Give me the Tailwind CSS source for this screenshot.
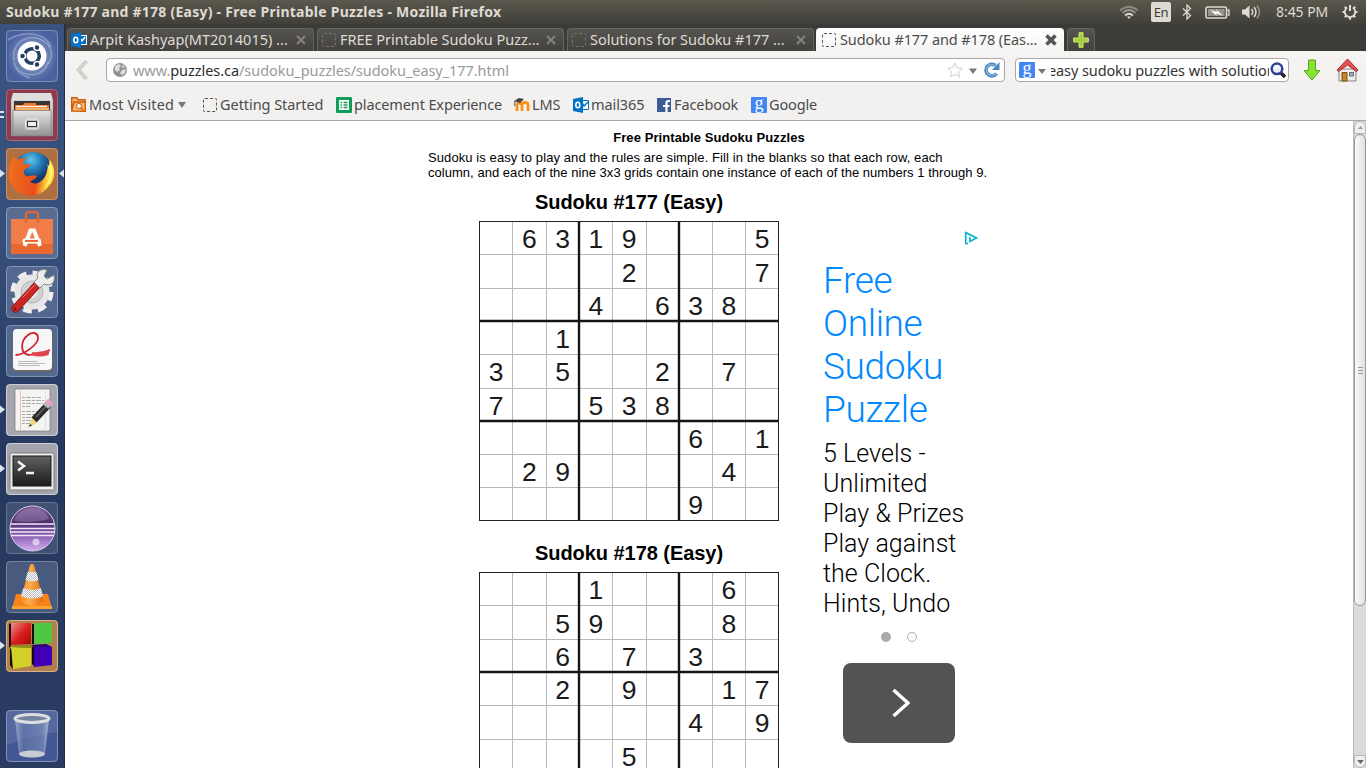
<!DOCTYPE html>
<html lang="en">
<head>
<meta charset="utf-8">
<title>Sudoku #177 and #178 (Easy) - Free Printable Puzzles</title>
<script src="https://cdn.jsdelivr.net/npm/@tailwindcss/browser@4"></script>
</head>
<body class="w-[1366px] h-[768px] overflow-hidden flex flex-col bg-white font-['Noto_Sans','Open_Sans',sans-serif]">

<!-- system panel -->
<header class="h-6 shrink-0 flex items-center justify-between bg-gradient-to-b from-[#5b594d] to-[#403f3a] text-[#dfdbd2]">
  <div class="pl-[6px] text-[14px] leading-6 font-bold tracking-[0.25px] whitespace-nowrap">Sudoku #177 and #178 (Easy) - Free Printable Puzzles - Mozilla Firefox</div>
  <div class="flex items-center h-6 pr-[8px]">
    <svg class="w-5 h-4" viewBox="0 0 20 16" fill="none" stroke="#dfdbd2" stroke-width="1.7"><path d="M1 6.5Q10-1 19 6.5" opacity=".4"/><path d="M3.5 9Q10 3 16.500 9" opacity=".55"/><path d="M6 11.500Q10 8 14 11.500"/><path d="M8 12.500h4l-2 2.500z" fill="#dfdbd2" stroke="none"/></svg>
    <div class="ml-[12px] w-5 h-5 rounded-[2px] bg-[#dfdbd2] text-[#3c3b37] text-[13px] leading-5 text-center tracking-[-0.3px]">En</div>
    <svg class="ml-[11px] w-[10px] h-4" viewBox="0 0 10 16" fill="none" stroke="#dfdbd2" stroke-width="1.3"><path d="M1 4.500L8.500 11.500 5 15V1L8.500 4.500 1 11.500"/></svg>
    <svg class="ml-[13px] w-[25px] h-[13px]" viewBox="0 0 25 13"><rect x="1" y="1" width="20.500" height="11" rx="1.500" fill="none" stroke="#dfdbd2" stroke-width="1.600"/><rect x="3" y="3" width="16.500" height="7" fill="#dfdbd2" opacity=".5"/><path d="M22.500 4h1.500v5h-1.500" fill="none" stroke="#dfdbd2" stroke-width="1.300"/><path d="M5 4l7 2-1-2.500 7 6-7-2 1 2.500z" fill="#fff"/></svg>
    <svg class="ml-[11px] w-[21px] h-4" viewBox="0 0 21 16"><path d="M1 5.500h3L8.500 1.500v13L4 10.500H1z" fill="#dfdbd2"/><g fill="none" stroke="#dfdbd2" stroke-width="1.500"><path d="M10.500 5q2.500 3 0 6"/><path d="M13 3q4 5 0 10"/><path d="M16 1.500q5 6.500 0 13" opacity=".5"/></g></svg>
    <div class="ml-[14px] w-[53px] text-[14px] leading-6 tracking-[-0.05px] whitespace-nowrap">8:45 PM</div>
    <svg class="ml-[13px] w-4 h-4" viewBox="0 0 16 16" fill="none" stroke="#dfdbd2"><path d="M5.200 3.600a5.200 5.200 0 1 0 5.600 0" stroke-width="1.800"/><path d="M8 1v6" stroke-width="2"/><path d="M2.800 2.800l1.700 1.700M13.200 2.800l-1.700 1.700M.5 8h2.500M13 8h2.500M2.800 13.200l1.700-1.700M13.200 13.200l-1.700-1.700M8 13v2.700" stroke-width="2"/></svg>
  </div>
</header>

<div class="flex flex-1 min-h-0">
  <!-- launcher -->
  <nav class="relative w-[65px] shrink-0 border-r border-[#1f2d4a] bg-gradient-to-b from-[#3a5481] via-[#334a76] to-[#30436c] flex flex-col pl-[6px] pt-[6px] gap-[7px]">
    <div class="absolute inset-0 top-[220px] bg-gradient-to-b from-transparent via-[#1b2c50]/60 via-[40%] to-[#22304f]/40"></div>
    <svg class="relative w-[52px] h-[52px] shrink-0 rounded-[4px]" viewBox="0 0 52 52"><defs><radialGradient id="dash"><stop offset="0" stop-color="#a3b2d4"/><stop offset="1" stop-color="#4a61a0"/></radialGradient></defs><rect width="52" height="52" fill="url(#dash)"/><g fill="none" stroke="#d3dcf0" stroke-opacity=".4" stroke-width="1.500"><path d="M8 31C4 9 29 0 42 15c5 6 4 13 0 19"/><path d="M8 34c9 16 31 13 34-2M2 10C18 0 39 2 45 17M8 32q2 12 16 16"/></g><circle cx="26" cy="26" r="14.500" fill="#fff"/><circle cx="26" cy="26" r="7.300" fill="none" stroke="#283c66" stroke-width="3.500"/><g stroke="#fff" stroke-width="1.500" fill="#283c66"><circle cx="16.500" cy="26" r="3"/><circle cx="31" cy="17.500" r="3"/><circle cx="31" cy="34.500" r="3"/></g><rect x=".5" y=".5" width="51" height="51" rx="4" fill="none" stroke="#91a1c8" stroke-opacity=".7"/></svg>
    <svg class="relative w-[52px] h-[52px] shrink-0 rounded-[4px]" viewBox="0 0 52 52"><defs><linearGradient id="cab" x2="0" y2="1"><stop stop-color="#e4e4e4"/><stop offset="1" stop-color="#929292"/></linearGradient></defs><rect width="52" height="52" fill="#8c3c51"/><path d="M7 4h38l2 7v36H5V11z" fill="url(#cab)"/><path d="M6 11L8 4h36l2 7z" fill="#dedede"/><path d="M8 12h36v12H8z" fill="#3a3635"/><path d="M9 16h8l1-2h12v2h13v8H9z" fill="#e7772b"/><path d="M10 17.500h31" stroke="#fff1df" stroke-width="1.500"/><path d="M10 20h33" stroke="#f6b36c" stroke-width="2"/><path d="M7 21.500h38V47H7z" fill="url(#cab)" stroke="#787878" stroke-width=".6"/><rect x="19.500" y="30" width="13" height="10" rx="2" fill="#c1c1c1" stroke="#f0f0f0"/><rect x="21.500" y="32.500" width="9" height="5" fill="#eee" stroke="#333"/><rect x=".5" y=".5" width="51" height="51" rx="4" fill="none" stroke="#a9697a"/></svg>
    <svg class="relative w-[52px] h-[52px] shrink-0 rounded-[4px]" viewBox="0 0 52 52"><defs><radialGradient id="globe" cx=".45" cy=".2"><stop stop-color="#64c5e7"/><stop offset=".5" stop-color="#257fb9"/><stop offset="1" stop-color="#15386f"/></radialGradient><linearGradient id="fox" x1="0" y1="0" x2="1" y2=".1"><stop stop-color="#ee7220"/><stop offset=".65" stop-color="#e84d1b"/><stop offset=".9" stop-color="#ffd93b"/></linearGradient></defs><rect width="52" height="52" fill="#ae7043"/><circle cx="27" cy="24" r="20" fill="url(#globe)"/><path d="M7 8c2 2 4 4 7 3 2-1 5-1 7-1-3 2-4 4-4 6 2 1 4 0 7 0 1 2-2 4-5 5-2 3-1 5 1 7 4 1 6-2 11 0-2 4-5 4-7 6 7 4 15-1 17-11l1-5 2 1-1-8c7 8 7 20 0 27-10 14-31 12-38-2C0 29 4 16 7 8z" fill="url(#fox)"/><path d="M44 13c5 10 3 21-6 27 9-11 5-19 3-24l2 2z" fill="#fff375"/><rect x=".5" y=".5" width="51" height="51" rx="4" fill="none" stroke="#c4936c"/></svg>
    <svg class="relative w-[52px] h-[52px] shrink-0 rounded-[4px]" viewBox="0 0 52 52"><rect width="52" height="52" fill="#596d93"/><path d="M5 12h42v35H5z" fill="#e8682f"/><path d="M5 12h42v25H5z" fill="#f17c47"/><path d="M20 16V8q0-3 3-3h6q3 0 3 3v8" fill="none" stroke="#d9683f" stroke-width="2.500"/><path d="M18.500 39L24.500 23.500h3.500L34 39" fill="none" stroke="#fff" stroke-width="4"/><rect x="16.500" y="31.500" width="18.500" height="5" rx="2" fill="#fff"/><path d="M19 34h13" stroke="#ec6934" stroke-width="2"/><rect x=".5" y=".5" width="51" height="51" rx="4" fill="none" stroke="#8a9aba"/></svg>
    <svg class="relative w-[52px] h-[52px] shrink-0 rounded-[4px]" viewBox="0 0 52 52"><rect width="52" height="52" fill="#53688f"/><circle cx="26" cy="26" r="18.500" fill="none" stroke="#eee" stroke-width="6" stroke-dasharray="8.500 6.030"/><circle cx="26" cy="26" r="17.500" fill="#e6e6e6"/><circle cx="26" cy="26" r="11" fill="#d1d1d1" stroke="#b6b6b6"/><circle cx="26" cy="26" r="6" fill="#e8e8e8"/><path d="M9.500 42.500L31 19" stroke="#861313" stroke-width="8" stroke-linecap="round"/><path d="M9.500 42.500L31 19" stroke="#cb2626" stroke-width="6.500" stroke-linecap="round"/><path d="M17 31L29 18.500" stroke="#ef7770" stroke-width="1"/><path d="M28 16l6 6 4-4c6 3 12-1 10-9l-7 4-3-3 3-6c-7-2-12 3-9 8z" fill="#ececec" stroke="#858585"/><circle cx="9" cy="43" r="1.500" fill="#711"/><rect x=".5" y=".5" width="51" height="51" rx="4" fill="none" stroke="#8595b2"/></svg>
    <svg class="relative w-[52px] h-[52px] shrink-0 rounded-[4px]" viewBox="0 0 52 52"><rect width="52" height="52" fill="#53688f"/><rect x="6.500" y="5" width="40" height="42" rx="4" fill="#686868"/><rect x="7" y="4" width="39" height="41" rx="4" fill="#f7f7f7"/><g fill="none" stroke="#cf2330"><path d="M9.500 30C18 30 33 19 32 12c-1-5-6-5-10-2-8 6-8 19 1 20" stroke-width="1.800"/><path d="M22 30c7 0 14-1 22-5" stroke-width="1.500"/></g><path d="M26 27q9 1 18-3l-1.500 6q-9 3-17 0z" fill="#dc4651"/><path d="M12 36.500h20M12 38.500h27M12 40.500h22" stroke="#bbb"/><rect x=".5" y=".5" width="51" height="51" rx="4" fill="none" stroke="#8191ae"/></svg>
    <svg class="relative w-[52px] h-[52px] shrink-0 rounded-[4px]" viewBox="0 0 52 52"><rect width="52" height="52" fill="#a6a6ae"/><path d="M9 5h35v42H9z" fill="#f4f4f2" stroke="#777" stroke-width=".7"/><path d="M14.500 5v42" stroke="#eebcbc"/><path d="M39.500 5v42" stroke="#dbe1ea"/><path d="M16 13.500h19M16 16.500h22M16 19.500h21M16 22.500h8M16 27.500h17M16 30.500h15M16 33.500h16M16 36.500h12M16 39.500h10" stroke="#a9a9a9" stroke-dasharray="3 1 5 1"/><path d="M28 36L42 21" stroke="#292929" stroke-width="7"/><path d="M30 33L43 19" stroke="#595959" stroke-width="2"/><path d="M23 43l3-9 5 5z" fill="#efd875"/><path d="M22.500 43l2-3 1.500 1.500z" fill="#222"/><path d="M39.500 22.500l3-3.500" stroke="#bbb" stroke-width="7"/><path d="M42 20l3-3" stroke="#e5a0c8" stroke-width="7"/><rect x=".5" y=".5" width="51" height="51" rx="4" fill="none" stroke="#ceced3"/></svg>
    <svg class="relative w-[52px] h-[52px] shrink-0 rounded-[4px]" viewBox="0 0 52 52"><defs><linearGradient id="term" x2="0" y2="1"><stop stop-color="#606060"/><stop offset="1" stop-color="#1b1b1b"/></linearGradient></defs><rect width="52" height="52" fill="#a4a4ac"/><rect x="4" y="10" width="44" height="37" rx="1.500" fill="#eeeeec" stroke="#7c7c7c"/><rect x="7" y="13" width="38" height="30" fill="url(#term)" stroke="#191919"/><path d="M12 18.500l6 4.500-6 4.500M20 30h8" fill="none" stroke="#f3f3f3" stroke-width="2.500"/><rect x=".5" y=".5" width="51" height="51" rx="4" fill="none" stroke="#cfcfd3"/></svg>
    <svg class="relative w-[52px] h-[52px] shrink-0 rounded-[4px]" viewBox="0 0 52 52"><defs><linearGradient id="ecl" x2="0" y2="1"><stop stop-color="#7d5c99"/><stop offset=".35" stop-color="#4b2f68"/><stop offset=".6" stop-color="#7e52a8"/><stop offset="1" stop-color="#d3aff0"/></linearGradient></defs><rect width="52" height="52" fill="#3f5274"/><circle cx="26.500" cy="26.500" r="22.500" fill="url(#ecl)" stroke="#d8c6e8"/><path d="M8 19C12 4 37 0 43 17c-9 3-24 4-35 2z" fill="#b9a0d0" opacity=".35"/><path d="M5 22h43M4 26.500h45M4 30h45M5 33.500h43" stroke="#f1e8fa" stroke-width="1.400"/><circle cx="30" cy="40" r="3.500" fill="#f0e2fa" opacity=".7"/><rect x=".5" y=".5" width="51" height="51" rx="4" fill="none" stroke="#65738c"/></svg>
    <svg class="relative w-[52px] h-[52px] shrink-0 rounded-[4px]" viewBox="0 0 52 52"><defs><linearGradient id="cone"><stop stop-color="#ff8d24"/><stop offset=".4" stop-color="#ffac4d"/><stop offset="1" stop-color="#df6b0c"/></linearGradient><pattern id="check" width="2" height="2" patternUnits="userSpaceOnUse"><rect width="2" height="2" fill="#fff"/><path d="M0 0h1v1H0zM1 1h1v1H1z" fill="#b7bbc0"/></pattern></defs><rect width="52" height="52" fill="#485b7e"/><path d="M10 33h32l4 15H6z" fill="#f58317"/><path d="M6 45h40v3H6z" fill="#ffa12e"/><path d="M24 4q2-2 4 0l9.500 36q-11 9-23 0z" fill="url(#cone)"/><path d="M21.700 11h8.600l2.300 8q-6 3-13.200 0zM17.300 27q9 4 17.500 0l2.400 8q-11 5-22.200 0z" fill="url(#check)"/><rect x=".5" y=".5" width="51" height="51" rx="4" fill="none" stroke="#75849e"/></svg>
    <svg class="relative w-[52px] h-[52px] shrink-0 rounded-[4px]" viewBox="0 0 52 52"><defs><linearGradient id="red" x2="1" y2="1"><stop stop-color="#ef8f8f"/><stop offset=".5" stop-color="#dc1f1f"/><stop offset="1" stop-color="#a60808"/></linearGradient></defs><rect width="52" height="52" fill="#b0804f"/><path d="M3 4l3-1v21l-3 4zM26 4h3v20h-3zM4 29l2-2 1 22-3-4zM26 26l3 1v20l-3-3z" fill="#130b08"/><path d="M5 3h20v21L5 25z" fill="url(#red)"/><path d="M28 3h18v20l-18 1z" fill="#4fc740"/><path d="M5 27l20 1v18L7 49z" fill="#d2d12a"/><path d="M5 27l3-2h20l-3 3z" fill="#8d8c13"/><path d="M28 27h18v18l-18 2z" fill="#4200b6"/><path d="M25 25l15-1 6 3H28z" fill="#27017c"/><rect x=".5" y=".5" width="51" height="51" rx="4" fill="none" stroke="#d6b289"/></svg>
    <svg class="relative mt-[31px] w-[52px] h-[52px] shrink-0 rounded-[4px]" viewBox="0 0 52 52"><defs><linearGradient id="bin"><stop stop-color="#a7b6d6" stop-opacity=".8"/><stop offset=".25" stop-color="#6479ad" stop-opacity=".6"/><stop offset=".8" stop-color="#7f92bd" stop-opacity=".6"/><stop offset="1" stop-color="#a9b6d2"/></linearGradient></defs><rect width="52" height="52" fill="#425793"/><path d="M0 0h52v22Q20 26 0 36z" fill="#7285b1" opacity=".4"/><path d="M9 9l4 35q13 7 26 0l4-35z" fill="url(#bin)"/><ellipse cx="26" cy="44" rx="13" ry="3.500" fill="#c8cdd1"/><ellipse cx="26" cy="8.500" rx="17" ry="4" fill="#7582a0" stroke="#dcdedd" stroke-width="3"/><rect x=".5" y=".5" width="51" height="51" rx="4" fill="none" stroke="#7e91bd"/></svg>
    <!-- running-window markers -->
    <svg class="absolute left-0 top-0 w-[65px] h-[744px]" viewBox="0 0 65 744" fill="#dfe3ea"><path d="M0 87h4v2H0zM0 92h4v2H0zM0 145.500l5 4-5 4zM64 145.500l-5 4 5 4zM0 381.500l5 4-5 4zM0 440.500l5 4-5 4zM0 617.500l5 4-5 4z"/></svg>
  </nav>

  <main class="flex-1 min-w-0 flex flex-col">
    <!-- tabs -->
    <div class="h-[27px] shrink-0 flex items-end pl-[2px] gap-[3px] bg-[#3c3b37] text-[14.5px] text-[#dfdbd2] whitespace-nowrap">
      <div class="w-[247px] h-[23px] rounded-t-[4px] border border-b-0 border-[#65645f] bg-gradient-to-b from-[#555450] to-[#42413d] flex items-center pl-[3px] pr-[7px]">
        <svg class="w-4 h-4" viewBox="0 0 16 16"><path d="M7 3h9v10H7z" fill="#fff"/><path d="M8 4h7v8H8z" fill="#0072c6"/><path d="M9 6l2 3 3-4" fill="none" stroke="#fff" stroke-width="1.500"/><path d="M0 2l10-2v16L0 14z" fill="#0072c6"/><ellipse cx="4.800" cy="8" rx="2" ry="2.700" fill="none" stroke="#fff" stroke-width="1.600"/></svg>
        <span class="ml-[3px]">Arpit Kashyap(MT2014015) ...</span>
        <svg class="ml-auto w-[10px] h-[10px]" viewBox="0 0 10 10"><path d="M1 1l8 8M9 1L1 9" stroke="#85837b" stroke-width="2"/></svg>
      </div>
      <div class="w-[247px] h-[23px] rounded-t-[4px] border border-b-0 border-[#65645f] bg-gradient-to-b from-[#555450] to-[#42413d] flex items-center pl-[4px] pr-[7px]">
        <span class="w-[14px] h-[14px] rounded-[2px] border border-dashed border-[#77756e]"></span>
        <span class="ml-[4px] tracking-[-0.02px]">FREE Printable Sudoku Puzz...</span>
        <svg class="ml-auto w-[10px] h-[10px]" viewBox="0 0 10 10"><path d="M1 1l8 8M9 1L1 9" stroke="#85837b" stroke-width="2"/></svg>
      </div>
      <div class="w-[247px] h-[23px] rounded-t-[4px] border border-b-0 border-[#65645f] bg-gradient-to-b from-[#555450] to-[#42413d] flex items-center pl-[4px] pr-[7px]">
        <span class="w-[14px] h-[14px] rounded-[2px] border border-dashed border-[#77756e]"></span>
        <span class="ml-[4px] tracking-[-0.02px]">Solutions for Sudoku #177 ...</span>
        <svg class="ml-auto w-[10px] h-[10px]" viewBox="0 0 10 10"><path d="M1 1l8 8M9 1L1 9" stroke="#85837b" stroke-width="2"/></svg>
      </div>
      <div class="-ml-[1px] w-[248px] h-[23px] rounded-t-[4px] bg-gradient-to-b from-white to-[#f4f4f3] text-[#4c4c4c] flex items-center pl-[6px] pr-[7px]">
        <span class="w-[14px] h-[14px] rounded-[2px] border border-dashed border-[#555]"></span>
        <span class="ml-[4px] tracking-[-0.1px]">Sudoku #177 and #178 (Eas...</span>
        <svg class="ml-auto w-[12px] h-[12px]" viewBox="0 0 12 12"><path d="M1.500 1.500l9 9M10.500 1.500l-9 9" stroke="#555" stroke-width="3.600"/></svg>
      </div>
      <div class="w-[28px] h-[23px] rounded-t-[4px] border border-b-0 border-[#65645f] bg-gradient-to-b from-[#555450] to-[#42413d] flex items-center justify-center">
        <svg class="w-4 h-4" viewBox="0 0 16 16"><path d="M6 .7h4V6h5.300v4H10v5.300H6V10H.7V6H6z" fill="#a6cf3c" stroke="#cfe779"/></svg>
      </div>
    </div>

    <!-- navigation -->
    <div class="h-[38px] shrink-0 flex items-center bg-gradient-to-b from-[#f5f4f3] to-[#f2f1f0]">
      <svg class="ml-[10px] w-[14px] h-5" viewBox="0 0 14 20"><path d="M11.500 1L3.500 10l8 9" fill="none" stroke="#d3d1ce" stroke-width="4"/></svg>
      <div class="ml-[17px] w-[899px] h-[24px] rounded-[4px] border border-[#a9a7a4] bg-white flex items-center pl-[6px] pr-[4px] text-[14.500px] text-[#9a9a9a] whitespace-nowrap">
        <svg class="w-[14px] h-[14px]" viewBox="0 0 14 14"><circle cx="7" cy="7" r="7" fill="#929292"/><path d="M2 3l4-2 2 2-2 2 1 2-3 2-2-2zM9 7l4-1-1 4-3 2-2-2zM10 1l2 3-3 1z" fill="#dedede"/></svg>
        <span class="ml-[6px] pt-[2px] tracking-[-0.06px]">www.<span class="text-[#2f2f2f]">puzzles.ca</span>/sudoku_puzzles/sudoku_easy_177.html</span>
        <svg class="ml-auto w-4 h-4" viewBox="0 0 16 16"><path d="M8 1l2.200 4.700 5 .6-3.700 3.500 1 5L8 12.400l-4.500 2.400 1-5L.8 6.300l5-.6z" fill="#fff" stroke="#cfcfcf"/></svg>
        <svg class="ml-[6px] mt-[2px] w-2 h-[6px]" viewBox="0 0 8 6"><path d="M0 .5h8L4 6z" fill="#777"/></svg>
        <svg class="ml-[7px] w-4 h-4" viewBox="0 0 16 16"><path d="M12.500 11.500A5.800 5.800 0 1 1 11.500 3.500" fill="none" stroke="#4c86c1" stroke-width="3.600"/><path d="M15.500 0v8H8z" fill="#4c86c1"/><path d="M12 11.500A5.500 5.500 0 1 1 11.500 3.700" fill="none" stroke="#85b3df" stroke-width="1.300"/></svg>
      </div>
      <div class="ml-[10px] w-[274px] h-[24px] rounded-[4px] border border-[#a9a7a4] bg-white flex items-center pl-[3px] pr-[2px] text-[14.500px] text-[#333] whitespace-nowrap">
        <span class="w-4 h-4 shrink-0 rounded-[1px] bg-[#4285f4] text-white text-[18px] leading-[12px] text-center font-['Liberation_Serif',serif]">g</span>
        <svg class="ml-[3px] mt-[2px] shrink-0 w-2 h-[5px]" viewBox="0 0 8 5"><path d="M0 0h8L4 5z" fill="#777"/></svg>
        <span class="ml-[5px] pt-[2px] w-[218px] overflow-hidden flex justify-start"><span class="-ml-[3px] tracking-[-0.1px]">easy sudoku puzzles with solution</span></span>
        <svg class="ml-auto shrink-0 w-4 h-4" viewBox="0 0 16 16"><path d="M11 11l4 4" stroke="#222" stroke-width="3.400"/><circle cx="7" cy="6.800" r="5.300" fill="#e9f0fb" stroke="#30418f" stroke-width="2.500"/><path d="M4.500 6q1-2.500 4-2" fill="none" stroke="#fff" stroke-width="1.500"/></svg>
      </div>
      <svg class="ml-[14px] w-[18px] h-[22px]" viewBox="0 0 18 22"><path d="M5.500 1h7v10.500h4.500L9 21 1 11.500h4.500z" fill="#8ae234" stroke="#54a31b"/></svg>
      <svg class="ml-[15px] w-[23px] h-6" viewBox="0 0 23 24"><path d="M3 11h17v12H3z" fill="#eee" stroke="#838383"/><path d="M6 14.500h5V23H6z" fill="#c58428" stroke="#7b5313"/><path d="M13.500 14.500h4v3.500h-4z" fill="#9bb2c9" stroke="#666"/><path d="M11.500 1L22 12l-1.500 1.500L11.500 7l-9 6.500L1 12z" fill="#de5454" stroke="#a92424"/></svg>
    </div>

    <!-- bookmarks -->
    <div class="h-8 shrink-0 border-b border-[#aaa8a5] bg-[#f2f1f0] flex items-center pl-[6px] text-[14.500px] text-[#4c4c4c] whitespace-nowrap">
      <svg class="w-[15px] h-[15px]" viewBox="0 0 15 15"><path d="M.7 13V.7H6l1 2h7V5M.7 14L3 5h11.300v9.300z" fill="#f7b676" stroke="#ce5c00" stroke-width="1.400"/><circle cx="8" cy="9" r="2.500" fill="#fff" stroke="#ce5c00"/><path d="M10 11l2 2" stroke="#ce5c00" stroke-width="1.500"/></svg>
      <span class="ml-[3px] w-[86px] tracking-[0.15px]">Most Visited</span>
      <svg class="ml-[3px] w-2 h-[6px]" viewBox="0 0 8 6"><path d="M0 0h8L4 6z" fill="#777"/></svg>
      <span class="ml-[17px] w-[14px] h-[14px] rounded-[2px] border border-dashed border-[#555]"></span>
      <span class="ml-[3px] w-[104px] tracking-[-0.05px]">Getting Started</span>
      <svg class="ml-[12px] w-4 h-4" viewBox="0 0 16 16"><rect width="16" height="16" rx="1" fill="#0f9d58"/><path d="M3 3h10v10H3z" fill="#fff"/><path d="M4.500 5.500h1.500M7.500 5.500h4M4.500 8h1.500M7.500 8h4M4.500 10.500h1.500M7.500 10.500h4" stroke="#0f9d58" stroke-width="1.300"/></svg>
      <span class="ml-[2px] w-[148px] tracking-[-0.12px]">placement Experience</span>
      <svg class="ml-[12px] w-4 h-4" viewBox="0 0 16 16"><path d="M3 14V8q0-2 2.500-2T8 8v6M8 8q0-2.500 3-2.500T14 8v6" fill="none" stroke="#f7931e" stroke-width="2.800"/><path d="M0 4l5-3 5 1-4 4z" fill="#444"/><path d="M.8 4v5" stroke="#555"/></svg>
      <span class="ml-[2px] w-[29px] tracking-[-0.1px]">LMS</span>
      <svg class="ml-[12px] w-4 h-4" viewBox="0 0 16 16"><path d="M8 3.500h7.500v9H8z" fill="#fff" stroke="#0072c6"/><path d="M9 6l2 3 4-4" fill="none" stroke="#0072c6" stroke-width="1.500"/><path d="M0 2l10-2v16L0 14z" fill="#0072c6"/><ellipse cx="4.800" cy="8" rx="2" ry="2.700" fill="none" stroke="#fff" stroke-width="1.600"/></svg>
      <span class="ml-[2px] w-[53px] tracking-[-0.1px]">mail365</span>
      <svg class="ml-[13px] w-[14px] h-[14px]" viewBox="0 0 14 14"><path d="M0 0h14v14H0z" fill="#3e5b98"/><path d="M9.500 14V5q0-2 2-2H13M6 8h6.500" fill="none" stroke="#fff" stroke-width="2.200"/></svg>
      <span class="ml-[3px] w-[64px] tracking-[-0.1px]">Facebook</span>
      <span class="ml-[13px] w-4 h-4 shrink-0 rounded-[1px] bg-[#4285f4] text-white text-[18px] leading-[12px] text-center font-['Liberation_Serif',serif]">g</span>
      <span class="ml-[2px] tracking-[-0.15px]">Google</span>
    </div>

    <!-- page -->
    <div class="flex-1 min-h-0 flex overflow-hidden">
      <section class="flex-1 min-w-0 pt-[9px] pl-[363px] font-['Liberation_Sans',Arial,sans-serif] text-black">
        <div class="w-[562px] text-center text-[13px] leading-[15px] font-bold tracking-[0.08px]">Free Printable Sudoku Puzzles</div>
        <p class="mt-[5px] w-[575px] text-[13px] leading-[15px] whitespace-nowrap"><span class="tracking-[0.09px]">Sudoku is easy to play and the rules are simple. Fill in the blanks so that each row, each</span><br><span class="tracking-[0.035px]">column, and each of the nine 3x3 grids contain one instance of each of the numbers 1 through 9.</span></p>
        <div class="flex mt-[11px] pl-[51px]">
          <div class="w-[300px] shrink-0">
            <h2 class="text-center text-[20px] leading-[23px] font-bold tracking-[-0.05px]">Sudoku #177 (Easy)</h2>
            <svg id="p177" class="mt-[7px] block w-[300px] h-[300px]" viewBox="0 0 300 300"></svg>
            <h2 class="mt-[21px] text-center text-[20px] leading-[23px] font-bold tracking-[-0.05px]">Sudoku #178 (Easy)</h2>
            <svg id="p178" class="mt-[7px] block w-[300px] h-[300px]" viewBox="0 0 300 300"></svg>
          </div>
          <aside class="ml-[44px] mt-[40px] w-[160px] shrink-0 font-['Roboto',sans-serif] font-light">
            <svg class="ml-[141px] w-[14px] h-[14px] block" viewBox="0 0 14 14" fill="none" stroke="#00aecd" stroke-width="1.600"><path d="M4 12.500H1.700V1.500L12.500 7 6 10.500V6M6 3.500v1.300"/></svg>
            <div class="mt-[14px] text-[37px] leading-[43px] tracking-[-0.35px] text-[#0088ff] whitespace-nowrap">Free<br>Online<br>Sudoku<br>Puzzle</div>
            <div class="mt-[8px] text-[25px] leading-[30px] tracking-[0.04px] whitespace-nowrap">5 Levels -<br>Unlimited<br>Play &amp; Prizes<br>Play against<br>the Clock.<br>Hints, Undo</div>
            <div class="mt-[13px] ml-[58px] flex gap-4"><span class="w-[10px] h-[10px] rounded-full bg-[#aaa]"></span><span class="w-[10px] h-[10px] rounded-full border border-[#aaa]"></span></div>
            <div class="mt-[21px] ml-[20px] w-[112px] h-[80px] rounded-[8px] bg-[#535353] flex items-center justify-center"><svg class="ml-[3px] w-[18px] h-[30px]" viewBox="0 0 18 30"><path d="M1.500 2L16 15 1.500 28" fill="none" stroke="#fff" stroke-width="3.500"/></svg></div>
          </aside>
        </div>
      </section>
      <div class="w-[13px] shrink-0 bg-[#dcdad8] border-l border-[#bdbbb8] flex flex-col items-center">
        <div class="w-3 h-[13px] rounded-t-[6px] border border-[#b8b6b3] bg-[#f0efee] flex items-center justify-center"><svg class="w-[5px] h-[3px]" viewBox="0 0 5 3"><path d="M0 3h5L2.500 0z" fill="#999"/></svg></div>
        <div class="w-3 h-[472px] rounded-[6px] border border-[#9a9895] bg-gradient-to-r from-[#fafafa] to-[#e2e1df] flex flex-col items-center justify-center gap-[2px]"><i class="w-[5px] h-px bg-[#999]"></i><i class="w-[5px] h-px bg-[#999]"></i><i class="w-[5px] h-px bg-[#999]"></i></div>
        <div class="mt-auto w-3 h-[13px] rounded-b-[6px] border border-[#b8b6b3] bg-[#f0efee] flex items-center justify-center"><svg class="w-[7px] h-[4px]" viewBox="0 0 5 3"><path d="M0 0h5L2.500 3z" fill="#666"/></svg></div>
      </div>
    </div>
  </main>
</div>

<script>
const puzzles = {
  p177: [".6319...5", "....2...7", "...4.638.", "..1......", "3.5..2.7.", "7..538...", "......6.1", ".29....4.", "......9.."],
  p178: ["...1...6.", "..59...8.", "..6.7.3..", "..2.9..17", "......4.9", "....5...."]
};
for (const [id, rows] of Object.entries(puzzles)) {
  let s = "";
  for (const i of [1, 2, 4, 5, 7, 8]) {
    const p = Math.round(i * 33.3) + 0.5;
    s += `<path d="M${p} 0V300M0 ${p}H300" stroke="#b8b8b8"/>`;
  }
  for (const p of [100, 200]) s += `<path d="M${p} 0V300M0 ${p}H300" stroke="#151515" stroke-width="2.4"/>`;
  s += `<rect x=".5" y=".5" width="299" height="299" fill="none" stroke="#222"/>`;
  rows.forEach((r, y) => [...r].forEach((d, x) => {
    if (d !== ".") s += `<text x="${(17 + x * 33.25).toFixed(1)}" y="${(27.3 + y * 33.25).toFixed(1)}" font-size="26.500" text-anchor="middle" fill="#1a1a1a">${d}</text>`;
  }));
  document.getElementById(id).innerHTML = s;
}
</script>
</body>
</html>
